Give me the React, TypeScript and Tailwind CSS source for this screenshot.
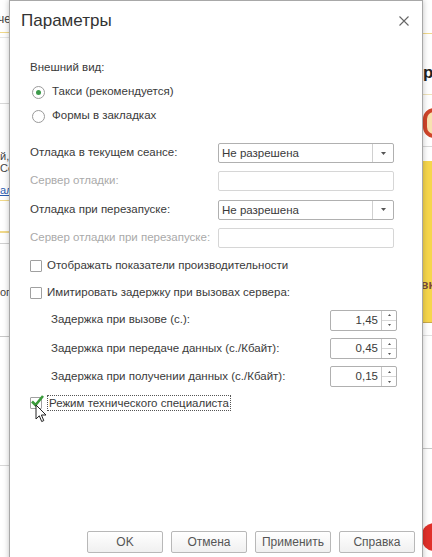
import React from "react";

const font = { fontFamily: '"Liberation Sans", Arial, sans-serif' };

function Radio({ checked, label }: { checked?: boolean; label: string }) {
  return (
    <div className="flex items-center gap-[7px] h-[24px]">
      <span className="w-[13px] h-[13px] rounded-full border border-[#9a9a9a] bg-white flex items-center justify-center">
        {checked && <span className="w-[5px] h-[5px] rounded-full bg-[#3c9a4a]" />}
      </span>
      <span className="text-[11.5px] text-[#3a3a3a]">{label}</span>
    </div>
  );
}

function Select({ value }: { value: string }) {
  return (
    <div className="w-[176px] h-[20px] border border-[#b0b0b0] rounded-[2px] bg-white flex">
      <div className="flex-1 pl-[3px] text-[11.5px] leading-[18px] text-[#3a3a3a]">{value}</div>
      <div className="w-[21px] border-l border-[#d0d0d0] flex items-center justify-center">
        <svg width="5" height="3" viewBox="0 0 5 3">
          <path d="M0 0h5L2.5 3z" fill="#555" />
        </svg>
      </div>
    </div>
  );
}

function Input() {
  return <div className="w-[176px] h-[20px] border border-[#d6d6d6] rounded-[2px] bg-white" />;
}

function Check({ label }: { label: string }) {
  return (
    <div className="flex items-center gap-[5px]">
      <span className="w-[12px] h-[12px] border border-[#a0a0a0] rounded-[1px] bg-white" />
      <span className="text-[11.5px] text-[#3a3a3a] whitespace-nowrap">{label}</span>
    </div>
  );
}

function Spin({ value }: { value: string }) {
  return (
    <div className="w-[67px] h-[21px] border border-[#b0b0b0] rounded-[2px] bg-white flex">
      <div className="flex-1 text-right pr-[3px] text-[11.5px] leading-[19px] text-[#3a3a3a]">{value}</div>
      <div className="w-[15px] border-l border-[#c8c8c8] flex flex-col">
        <div className="flex-1 flex items-center justify-center border-b border-[#d8d8d8]">
          <svg width="3" height="2" viewBox="0 0 3 2">
            <path d="M0 2L1.5 0L3 2z" fill="#555" />
          </svg>
        </div>
        <div className="flex-1 flex items-center justify-center">
          <svg width="3" height="2" viewBox="0 0 3 2">
            <path d="M0 0h3L1.5 2z" fill="#555" />
          </svg>
        </div>
      </div>
    </div>
  );
}

function Btn({ label }: { label: string }) {
  return (
    <div className="w-[76px] h-[22px] border border-[#b8b8b8] rounded-[2px] bg-gradient-to-b from-white to-[#f0f0f0] flex items-center justify-center text-[12px] text-[#555]">
      {label}
    </div>
  );
}

export default function App() {
  return (
    <div className="relative w-[432px] h-[557px] overflow-hidden bg-white" style={font}>
      {/* Background application behind dialog */}
      <div className="absolute inset-y-0 left-0 w-[12px] bg-white">
        <div className="text-[12px] leading-[14px] text-[#444] pt-[12px] -ml-[2px]">че</div>
        <div className="mt-[6px] h-px bg-[#f1d98a]" />
        <div className="mt-[4px] h-px bg-[#e6e6e6]" />
        <div className="mt-[65px] h-px bg-[#d8d8d8]" />
        <div className="mt-[46px] text-[11px] leading-[12px] text-[#444]">й,</div>
        <div className="text-[11px] leading-[12px] text-[#444]">Co</div>
        <div className="mt-[10px] text-[11px] leading-[12px] text-[#2a5bb0] underline">ал</div>
        <div className="mt-[4px] h-px bg-[#f1d98a]" />
        <div className="mt-[30px] h-[2px] bg-[#f1d98a]" />
        <div className="mt-[10px] h-px bg-[#d0d0d0]" />
        <div className="mt-[42px] text-[11px] leading-[12px] text-[#444]">ог</div>
        <div className="mt-[38px] h-px bg-[#c8c8c8]" />
        <div className="mt-[128px] h-px bg-[#d8d8d8]" />
      </div>
      <div className="absolute inset-y-0 right-0 w-[12px] bg-white">
        <div className="mt-[33px] h-px bg-[#f1d98a]" />
        <div className="mt-[30px] text-[17px] leading-[18px] font-bold text-[#222] pl-[3px]">р</div>
        <div className="mt-[12px] h-px bg-[#efe2b8]" />
        <div className="mt-[13px] ml-[3px] w-[22px] h-[30px] rounded-full border-[4px] border-[#d0452a] bg-[#f8e2b0]" />
        <div className="mt-[8px] h-px bg-[#d8d8d8]" />
        <div className="mt-[14px] h-[162px] bg-[#f6d64c] border-b border-[#c8a84a] flex flex-col">
          <div className="mt-[115px] pl-[1px] text-[12px] font-bold text-[#7a4a3a]">вк</div>
        </div>
        <div className="mt-[12px] h-px bg-[#e0e0e0]" />
        <div className="mt-[112px] h-px bg-[#c8c8c8]" />
        <div className="mt-[74px] ml-[2px] w-[12px] h-[28px] rounded-l-full bg-[#e0302a]" />
      </div>

      {/* Dialog */}
      <div className="absolute left-[9px] top-0 w-[414px] h-[580px] bg-white border border-[#a8a8a8] shadow-[0_0_6px_rgba(0,0,0,0.25)] flex flex-col">
        <div className="h-[40px] flex items-center justify-between pl-[11px] pr-[13px]">
          <span className="text-[17px] text-[#333]">Параметры</span>
          <svg width="10" height="10" viewBox="0 0 10 10">
            <path d="M0.5 0.5L9.5 9.5M9.5 0.5L0.5 9.5" stroke="#666" strokeWidth="1.1" />
          </svg>
        </div>

        <div className="pl-[20px] pr-[25px] flex flex-col">
          <div className="mt-[15px] h-[24px] flex items-center text-[11.5px] text-[#3a3a3a]">Внешний вид:</div>
          <div className="pl-[2px]">
            <Radio checked label="Такси (рекомендуется)" />
            <Radio label="Формы в закладках" />
          </div>

          <div className="mt-[11px] h-[28px] flex items-center">
            <span className="w-[188px] text-[11.5px] text-[#3a3a3a] whitespace-nowrap">Отладка в текущем сеансе:</span>
            <Select value="Не разрешена" />
          </div>
          <div className="h-[28px] flex items-center">
            <span className="w-[188px] text-[11.5px] text-[#aaa] whitespace-nowrap">Сервер отладки:</span>
            <Input />
          </div>
          <div className="h-[29px] flex items-center">
            <span className="w-[188px] text-[11.5px] text-[#3a3a3a] whitespace-nowrap">Отладка при перезапуске:</span>
            <Select value="Не разрешена" />
          </div>
          <div className="h-[28px] flex items-center">
            <span className="w-[188px] text-[11.5px] text-[#aaa] whitespace-nowrap">Сервер отладки при перезапуске:</span>
            <Input />
          </div>
          <div className="h-[27px] flex items-center">
            <Check label="Отображать показатели производительности" />
          </div>
          <div className="h-[27px] flex items-center">
            <Check label="Имитировать задержку при вызовах сервера:" />
          </div>
          <div className="h-[28px] flex items-center justify-between pl-[21px]">
            <span className="text-[11.5px] text-[#3a3a3a]">Задержка при вызове (с.):</span>
            <Spin value="1,45" />
          </div>
          <div className="h-[29px] flex items-center justify-between pl-[21px]">
            <span className="text-[11.5px] text-[#3a3a3a]">Задержка при передаче данных (с./Кбайт):</span>
            <Spin value="0,45" />
          </div>
          <div className="h-[27px] flex items-center justify-between pl-[21px]">
            <span className="text-[11.5px] text-[#3a3a3a]">Задержка при получении данных (с./Кбайт):</span>
            <Spin value="0,15" />
          </div>
          <div className="relative h-[26px] flex items-center gap-[5px]">
            <span className="relative w-[12px] h-[12px] border border-[#a0a0a0] rounded-[1px] bg-white">
              <svg className="absolute -left-[1px] -top-[4px]" width="15" height="15" viewBox="0 0 15 15">
                <path d="M2 7.5L5.5 11L13 2" fill="none" stroke="#3a9a3a" strokeWidth="2.6" />
              </svg>
            </span>
            <span className="border border-dotted border-[#555] px-[1px] leading-[14px] text-[11.5px] text-[#3a3a3a] whitespace-nowrap">
              Режим технического специалиста
            </span>
            <svg className="absolute left-[5px] top-[14px]" width="12" height="19" viewBox="0 0 12 19">
              <path d="M1 1V15L4.3 11.8L6.7 17.5L8.8 16.6L6.4 11H11Z" fill="white" stroke="#222" strokeWidth="1" strokeLinejoin="round" />
            </svg>
          </div>
        </div>

        <div className="mt-[115px] flex justify-end gap-[8px] pr-[7px]">
          <Btn label="OK" />
          <Btn label="Отмена" />
          <Btn label="Применить" />
          <Btn label="Справка" />
        </div>
      </div>
    </div>
  );
}
